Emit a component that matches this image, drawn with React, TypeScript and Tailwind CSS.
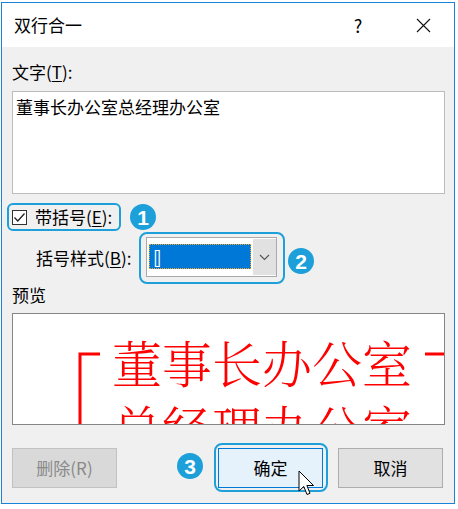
import React from "react";

const ui = { fontFamily: '"Noto Sans CJK SC", "Liberation Sans", sans-serif' };

function Badge({ n, className = "" }: { n: string; className?: string }) {
  return (
    <div
      className={`w-[26px] h-[26px] rounded-full bg-[#1d9fd9] text-white flex items-center justify-center text-[21px] leading-none font-bold ${className}`}
      style={{ fontFamily: '"Liberation Sans", Arial, sans-serif' }}
    >
      {n}
    </div>
  );
}

export default function App() {
  return (
    <div className="w-[458px] h-[509px] bg-white pl-[1px] pt-[2px]" style={ui}>
      <div className="w-[454px] h-[502px] border border-[#1883d7] flex flex-col">
        {/* Title bar */}
        <div className="h-[44px] bg-white flex items-center pl-[12px] pr-[8px] shrink-0">
          <span className="text-[17px] leading-[20px] text-black">双行合一</span>
          <div className="ml-auto flex items-center">
            <span className="w-[30px] text-center text-[18px] leading-[20px] text-black">?</span>
            <div className="ml-[27px] w-[46px] flex items-center justify-center">
              <svg width="15" height="15" viewBox="0 0 15 15">
                <path d="M1 1 L14 14 M14 1 L1 14" stroke="#111" strokeWidth="1.1" fill="none" />
              </svg>
            </div>
          </div>
        </div>

        {/* Body */}
        <div className="flex-1 bg-[#f0f0f0] px-[10px] flex flex-col text-[17px] leading-[20px] text-black">
          <div className="pt-[15px]">
            文字(<span className="underline underline-offset-2">T</span>):
          </div>
          <div className="mt-[9px] w-[433px] h-[103px] bg-white border border-[#bcbcbc] pl-[3px] pt-[5px]">
            董事长办公室总经理办公室
          </div>

          {/* Checkbox row */}
          <div className="mt-[9px] flex items-center">
            <div className="ml-[-5px] w-[114px] h-[28px] border-2 border-[#1d9fd9] rounded-[6px] pl-[3px] flex items-center">
              <div className="w-[15px] h-[15px] border border-[#333] bg-white flex items-center justify-center shrink-0">
                <svg width="13" height="13" viewBox="0 0 13 13">
                  <path d="M1.5 6.5 L4.8 10 L11.5 2.5" stroke="#222" strokeWidth="1.3" fill="none" />
                </svg>
              </div>
              <span className="ml-[8px] whitespace-nowrap">
                带括号(<span className="underline underline-offset-2">E</span>):
              </span>
            </div>
            <Badge n="1" className="ml-[9px]" />
          </div>

          {/* Combo row */}
          <div className="mt-[1px] flex items-center">
            <span className="ml-[24px] w-[103px] whitespace-nowrap">
              括号样式(<span className="underline underline-offset-2">B</span>):
            </span>
            <div className="w-[146px] h-[52px] border-2 border-[#1d9fd9] rounded-[8px] pl-[5px] pt-[3px]">
              <div className="w-[131px] h-[40px] border border-[#a9a9a9] bg-white flex pl-[2px] py-[1px]">
                <div className="mt-[5px] w-[102px] h-[25px] bg-[#0078d7] border border-dotted border-[#f5a623] flex items-center pl-[3px]">
                  <span className="text-white text-[17px] leading-[20px] tracking-[-3px]">[]</span>
                </div>
                <div className="ml-[2px] w-[23px] h-full bg-[#e1e1e1] flex items-center justify-center">
                  <svg width="11" height="7" viewBox="0 0 11 7">
                    <path d="M1 1 L5.5 5.5 L10 1" stroke="#555" strokeWidth="1.1" fill="none" />
                  </svg>
                </div>
              </div>
            </div>
            <Badge n="2" className="ml-[3px] mt-[6px]" />
          </div>

          <div className="mt-[1px]">预览</div>

          {/* Preview */}
          <div className="mt-[8px] w-[433px] h-[112px] bg-white border border-[#858585] relative overflow-hidden">
            <svg className="absolute left-0 top-0" width="433" height="112" viewBox="0 0 433 112">
              <path d="M67 112 L67 40 L87 40" stroke="#ff0000" strokeWidth="3" fill="none" />
              <path d="M412 40 L433 40" stroke="#ff0000" strokeWidth="3" fill="none" />
            </svg>
            <div
              className="pl-[99px] pt-[15px] text-[50px] leading-[65px] text-[#ff0000] font-light whitespace-nowrap"
              style={{ fontFamily: '"Noto Serif CJK SC", "Noto Sans CJK SC", serif' }}
            >
              <div>董事长办公室</div>
              <div>总经理办公室</div>
            </div>
          </div>

          {/* Buttons */}
          <div className="mt-[23px] flex items-center">
            <div className="w-[105px] h-[40px] bg-[#d9d9d9] border border-[#c2c2c2] text-[#8a8a8a] flex items-center justify-center">
              删除(R)
            </div>
            <Badge n="3" className="ml-[60px] mb-[4px]" />
            <div className="relative ml-[15px] w-[105px] h-[40px] bg-[#e5f1fb] border border-[#0078d7] flex items-center justify-center">
              <div className="absolute left-[-5px] top-[-6px] w-[114px] h-[49px] border-2 border-[#1d9fd9] rounded-[8px]" />
              确定
              <svg className="absolute left-[79px] top-[21px]" width="18" height="28" viewBox="0 0 18 28">
                <path d="M1 1 L1 21 L5.8 16.5 L9 24.5 L12 23.3 L8.9 15.5 L15.5 15.5 Z" fill="#fff" stroke="#000" strokeWidth="1" strokeLinejoin="round" />
              </svg>
            </div>
            <div className="ml-[15px] w-[105px] h-[40px] bg-[#e1e1e1] border border-[#adadad] flex items-center justify-center">
              取消
            </div>
          </div>
        </div>
      </div>
    </div>
  );
}
